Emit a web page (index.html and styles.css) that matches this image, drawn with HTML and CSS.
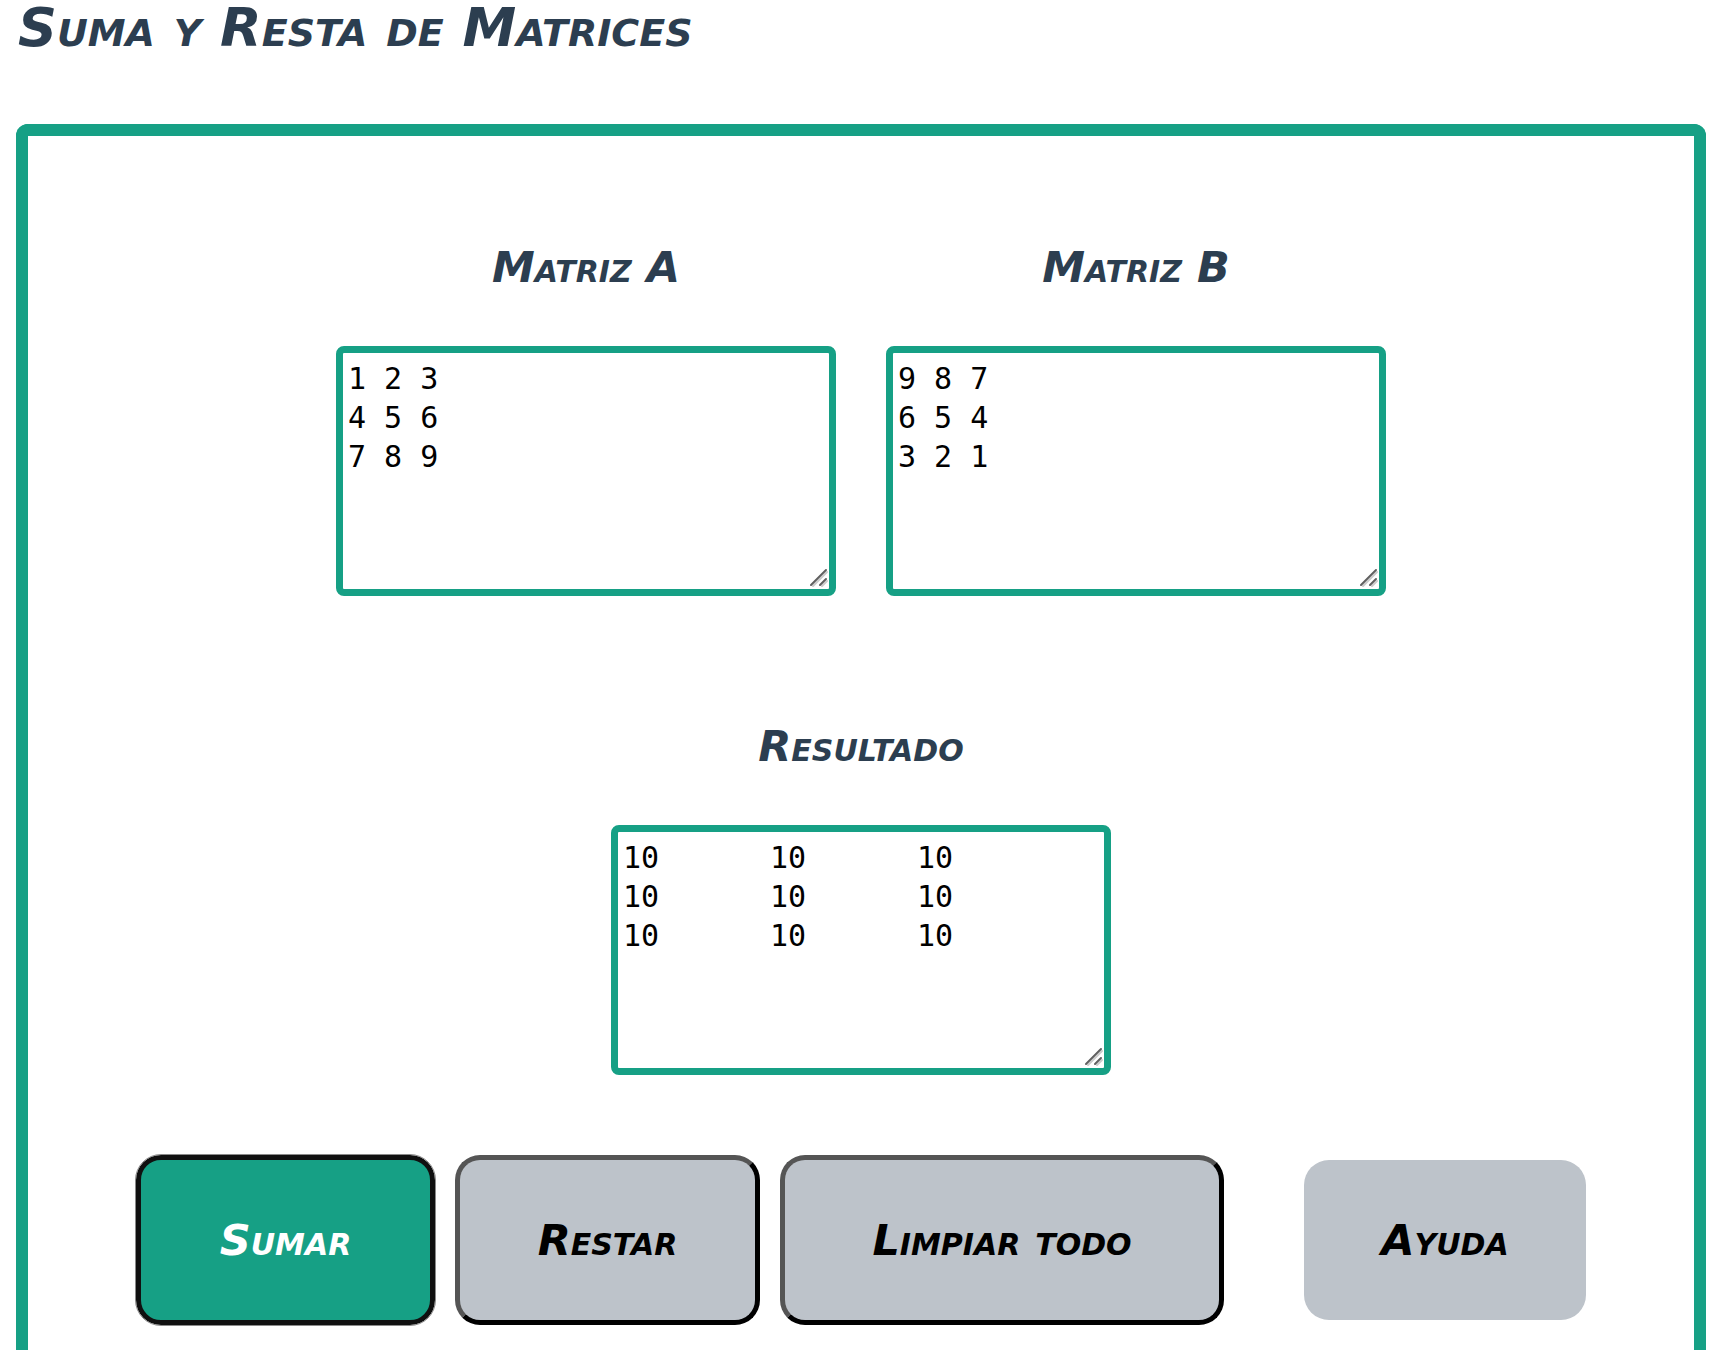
FILE: index.html
```html
<!DOCTYPE html>
<html lang="es">
<head>
  <meta charset="utf-8">
  <meta name="viewport" content="width=device-width, initial-scale=1">
  <title>Suma y Resta de Matrices</title>
  <link rel="stylesheet" href="styles.css">
</head>
<body>
  <h1 class="title">Suma y Resta de Matrices</h1>
  <main class="panel">
    <div class="row">
      <div class="matrix">
        <label class="matrix-label" for="matriz-a">Matriz A</label>
        <textarea class="matrix-input" id="matriz-a">1 2 3
4 5 6
7 8 9</textarea>
      </div>
      <div class="matrix">
        <label class="matrix-label" for="matriz-b">Matriz B</label>
        <textarea class="matrix-input" id="matriz-b">9 8 7
6 5 4
3 2 1</textarea>
      </div>
    </div>
    <div class="row">
      <div class="matrix">
        <label class="matrix-label" for="resultado">Resultado</label>
        <textarea class="matrix-input" id="resultado" readonly>10&#9;10&#9;10
10&#9;10&#9;10
10&#9;10&#9;10</textarea>
      </div>
    </div>
    <div class="actions">
      <button class="button button-primary" type="button">Sumar</button>
      <button class="button" type="button">Restar</button>
      <button class="button button-wide" type="button">Limpiar todo</button>
      <button class="button button-help" type="button">Ayuda</button>
    </div>
  </main>
</body>
</html>
```
FILE: styles.css
```css
* {
  box-sizing: border-box;
}

body {
  display: flex;
  flex-direction: column;
  min-height: 100vh;
  margin: 0;
  padding: 0 28px 0 16px;
  background: #fff;
  color: #2c3e50;
  font-family: "Comic Sans MS", "DejaVu Sans", sans-serif;
}

.title,
.matrix-label,
.button {
  font-style: italic;
  font-weight: bold;
  font-variant: small-caps;
  line-height: 52px;
}

.title {
  margin: 0 0 68px;
  padding-left: 2px;
  font-size: 54px;
  line-height: 56px;
}

.panel {
  display: flex;
  flex: 1;
  flex-direction: column;
  padding: 105px 20px 20px;
  border: 12px solid #16a085;
  border-bottom: 0;
  border-radius: 12px 12px 0 0;
}

.row {
  display: flex;
  flex-wrap: wrap;
  justify-content: center;
  gap: 50px;
}

.row + .row {
  margin-top: 124px;
}

.matrix {
  display: flex;
  flex-direction: column;
  align-items: center;
  gap: 53px;
}

.matrix-label {
  font-size: 43px;
}

.matrix-input {
  width: 500px;
  height: 250px;
  padding: 6px 5px;
  border: 7px solid #16a085;
  border-radius: 8px;
  background: #fff url("data:image/svg+xml,%3Csvg xmlns='http://www.w3.org/2000/svg' width='24' height='24' fill='none' stroke-width='2' stroke-linecap='round'%3E%3Cpath d='M8 21 22 7M17 21l5-5' stroke='%23ccc'/%3E%3Cpath d='M6 20 21 5M15 20l6-6' stroke='%23606060'/%3E%3C/svg%3E") right bottom / 24px 24px no-repeat;
  color: #000;
  font-family: Consolas, "DejaVu Sans Mono", monospace;
  font-size: 30px;
  line-height: 39px;
  tab-size: 147px;
}

/* The grip is part of the field's background, so the native one stays clear. */
.matrix-input::-webkit-resizer {
  background: transparent;
}

.actions {
  display: flex;
  flex-wrap: wrap;
  align-items: center;
  justify-content: center;
  gap: 20px;
  margin-top: 80px;
}

.button {
  min-width: 305px;
  height: 170px;
  padding: 0 10px;
  border: 5px solid;
  border-color: #555 #000 #000 #555;
  border-radius: 25px;
  background: #bdc3ca;
  color: #000;
  font-family: inherit;
  font-size: 43px;
}

.button-primary {
  min-width: 299px;
  border-color: #101010;
  outline: 1px solid #8a8a8a;
  background: #16a085;
  color: #fff;
}

.button-wide {
  min-width: 444px;
}

.button-help {
  min-width: 282px;
  height: 160px;
  margin-left: 60px;
  border: 0;
}
```
